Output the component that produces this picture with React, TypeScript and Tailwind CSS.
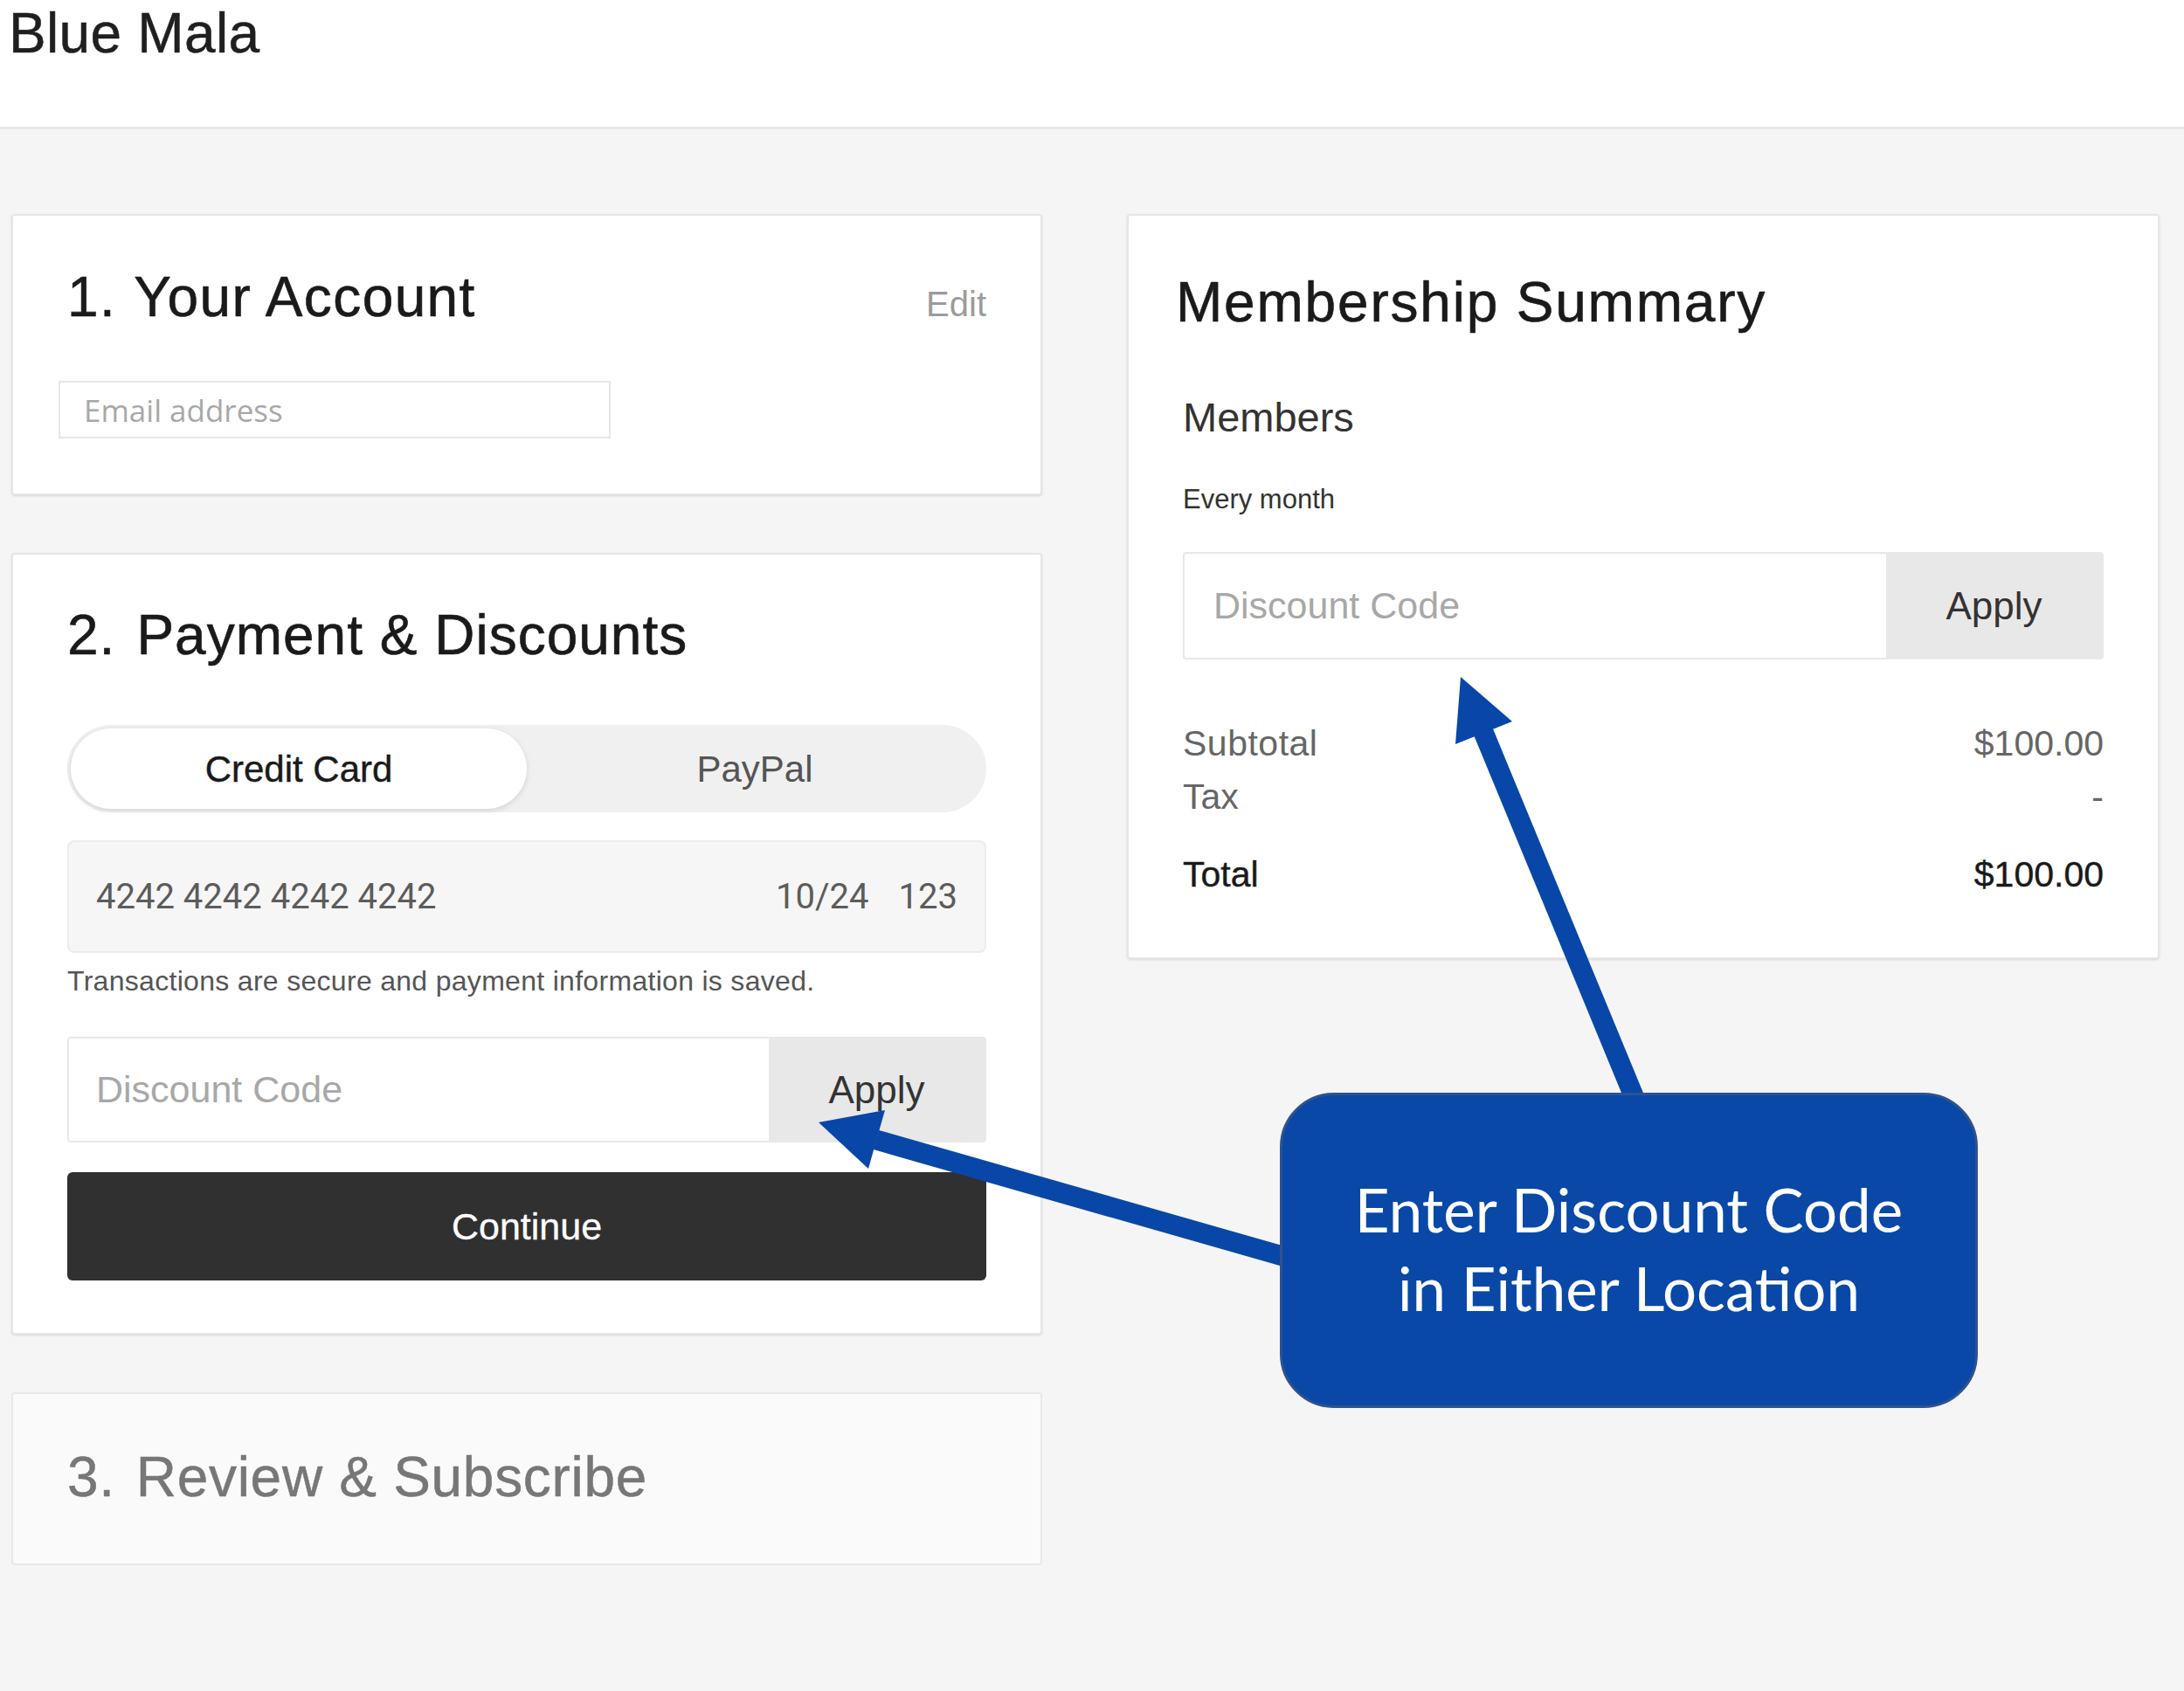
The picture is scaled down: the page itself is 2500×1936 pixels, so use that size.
export default function App() {
  return (
    <div className="relative min-h-screen w-[2500px] bg-[#f5f5f5] font-['Liberation_Sans',Arial,sans-serif] text-[#1a1a1a]">
      <header className="h-[148px] border-b-[3px] border-[#e8e8e8] bg-white pl-[10px]">
        <h1 className="text-[64px] leading-[1.2] tracking-[0.3px] text-[#1f1f1f] [-webkit-text-stroke:0.5px_#1f1f1f]">
          Blue Mala
        </h1>
      </header>

      <main className="flex gap-[97px] pl-[13px] pt-[97px]">
        {/* left column */}
        <div className="flex w-[1180px] flex-col gap-[66px]">
          <section className="rounded-[4px] border-2 border-[#e6e6e6] bg-white px-[62px] pb-[63px] pt-[55px] shadow-sm">
            <div className="flex items-baseline justify-between">
              <h2 className="text-[64px] leading-[77px] tracking-[1.4px] [-webkit-text-stroke:0.6px_#1a1a1a]">
                1.<span className="ml-[20px]">Your Account</span>
              </h2>
              <button className="text-[40px] text-[#9b9b9b]">Edit</button>
            </div>
            <input
              placeholder="Email address"
              className="-ml-[10px] mt-[57px] h-[66px] w-[632px] border-2 border-[#e6e6e6] bg-white pl-[27px] font-['Open_Sans',sans-serif] text-[35px] outline-none placeholder:text-[#a8a8a8]"
            />
          </section>

          <section className="rounded-[4px] border-2 border-[#e6e6e6] bg-white px-[62px] pb-[60px] pt-[54px] shadow-sm">
            <h2 className="text-[64px] leading-[77px] tracking-[1px] [-webkit-text-stroke:0.6px_#1a1a1a]">
              2.<span className="ml-[24px]">Payment &amp; Discounts</span>
            </h2>

            <div className="mt-[64px] flex h-[100px] rounded-full bg-[#f0f0f0] p-[4px]">
              <button className="flex flex-1 items-center justify-center rounded-full bg-white text-[42px] text-[#1a1a1a] shadow-[0_2px_6px_rgba(0,0,0,0.12)] [-webkit-text-stroke:0.4px_#1a1a1a]">
                Credit Card
              </button>
              <button className="flex flex-1 items-center justify-center text-[42px] text-[#555]">PayPal</button>
            </div>

            <div className="mt-[32px] flex h-[129px] items-center justify-between rounded-[8px] border-2 border-[#ececec] bg-[#f6f6f6] px-[31px] font-['Roboto',sans-serif] text-[40px] text-[#5c5c5c]">
              <span>4242 4242 4242 4242</span>
              <div className="flex gap-[34px]">
                <span>10/24</span>
                <span>123</span>
              </div>
            </div>

            <p className="mt-[14px] text-[32px] leading-[36px] tracking-[0.3px] text-[#555]">
              Transactions are secure and payment information is saved.
            </p>

            <div className="mt-[46px] flex h-[121px] overflow-hidden rounded-[4px] border-2 border-[#e8e8e8]">
              <input
                placeholder="Discount Code"
                className="min-w-0 flex-1 bg-white pl-[31px] text-[43px] outline-none placeholder:text-[#a8a8a8]"
              />
              <button className="w-[247px] bg-[#e8e8e8] text-[44px] text-[#333]">Apply</button>
            </div>

            <button className="mt-[34px] h-[124px] w-full rounded-[6px] bg-[#303030] text-[43px] text-white [-webkit-text-stroke:0.3px_#ffffff]">
              Continue
            </button>
          </section>

          <section className="rounded-[4px] border-2 border-[#e8e8e8] bg-[#fafafa] px-[62px] pb-[60px] pt-[57px]">
            <h2 className="text-[64px] leading-[77px] tracking-[0.7px] text-[#777] [-webkit-text-stroke:0.5px_#777777]">
              3.<span className="ml-[24px]">Review &amp; Subscribe</span>
            </h2>
          </section>
        </div>

        {/* right column */}
        <div className="w-[1182px] self-start">
          <section className="rounded-[4px] border-2 border-[#e6e6e6] bg-white px-[62px] pb-[71px] pt-[61px] shadow-sm">
            <h2 className="-ml-[8px] text-[64px] leading-[77px] tracking-[1.8px] [-webkit-text-stroke:0.6px_#1a1a1a]">
              Membership Summary
            </h2>
            <h3 className="mt-[65px] text-[47px] leading-[55px] text-[#333]">Members</h3>
            <p className="mt-[48px] text-[31px] leading-[37px] text-[#333]">Every month</p>

            <div className="mt-[42px] flex h-[123px] overflow-hidden rounded-[4px] border-2 border-[#e8e8e8]">
              <input
                placeholder="Discount Code"
                className="min-w-0 flex-1 bg-white pl-[33px] text-[43px] outline-none placeholder:text-[#a8a8a8]"
              />
              <button className="w-[247px] bg-[#e8e8e8] text-[44px] text-[#333]">Apply</button>
            </div>

            <div className="mt-[72px] flex justify-between text-[41px] leading-[48px] text-[#666]">
              <span className="tracking-[0.5px]">Subtotal</span>
              <span>$100.00</span>
            </div>
            <div className="mt-[13px] flex justify-between text-[41px] leading-[48px] text-[#666]">
              <span>Tax</span>
              <span>-</span>
            </div>
            <div className="mt-[41px] flex justify-between text-[41px] leading-[48px] text-[#1a1a1a] [-webkit-text-stroke:0.4px_#1a1a1a]">
              <span>Total</span>
              <span>$100.00</span>
            </div>
          </section>
        </div>
      </main>

      {/* annotation arrows */}
      <svg
        className="pointer-events-none absolute left-0 top-0"
        width="2500"
        height="1936"
        viewBox="0 0 2500 1936"
      >
        <line x1="1003" y1="1305" x2="1475" y2="1440" stroke="#0847a7" strokeWidth="23" />
        <polygon points="937,1285 1013,1271 994,1338" fill="#0847a7" />
        <line x1="1698" y1="838" x2="1873" y2="1262" stroke="#0847a7" strokeWidth="23" />
        <polygon points="1672,775 1731,826 1666,852" fill="#0847a7" />
      </svg>

      <div className="absolute left-[1465px] top-[1251px] h-[361px] w-[799px] rounded-[62px] border-[3px] border-[#2f528f] bg-[#0a48a8] pt-[86px] text-center font-['Lato',sans-serif] text-[69px] leading-[90px] text-white">
        Enter Discount Code
        <br />
        in Either Location
      </div>
    </div>
  );
}
